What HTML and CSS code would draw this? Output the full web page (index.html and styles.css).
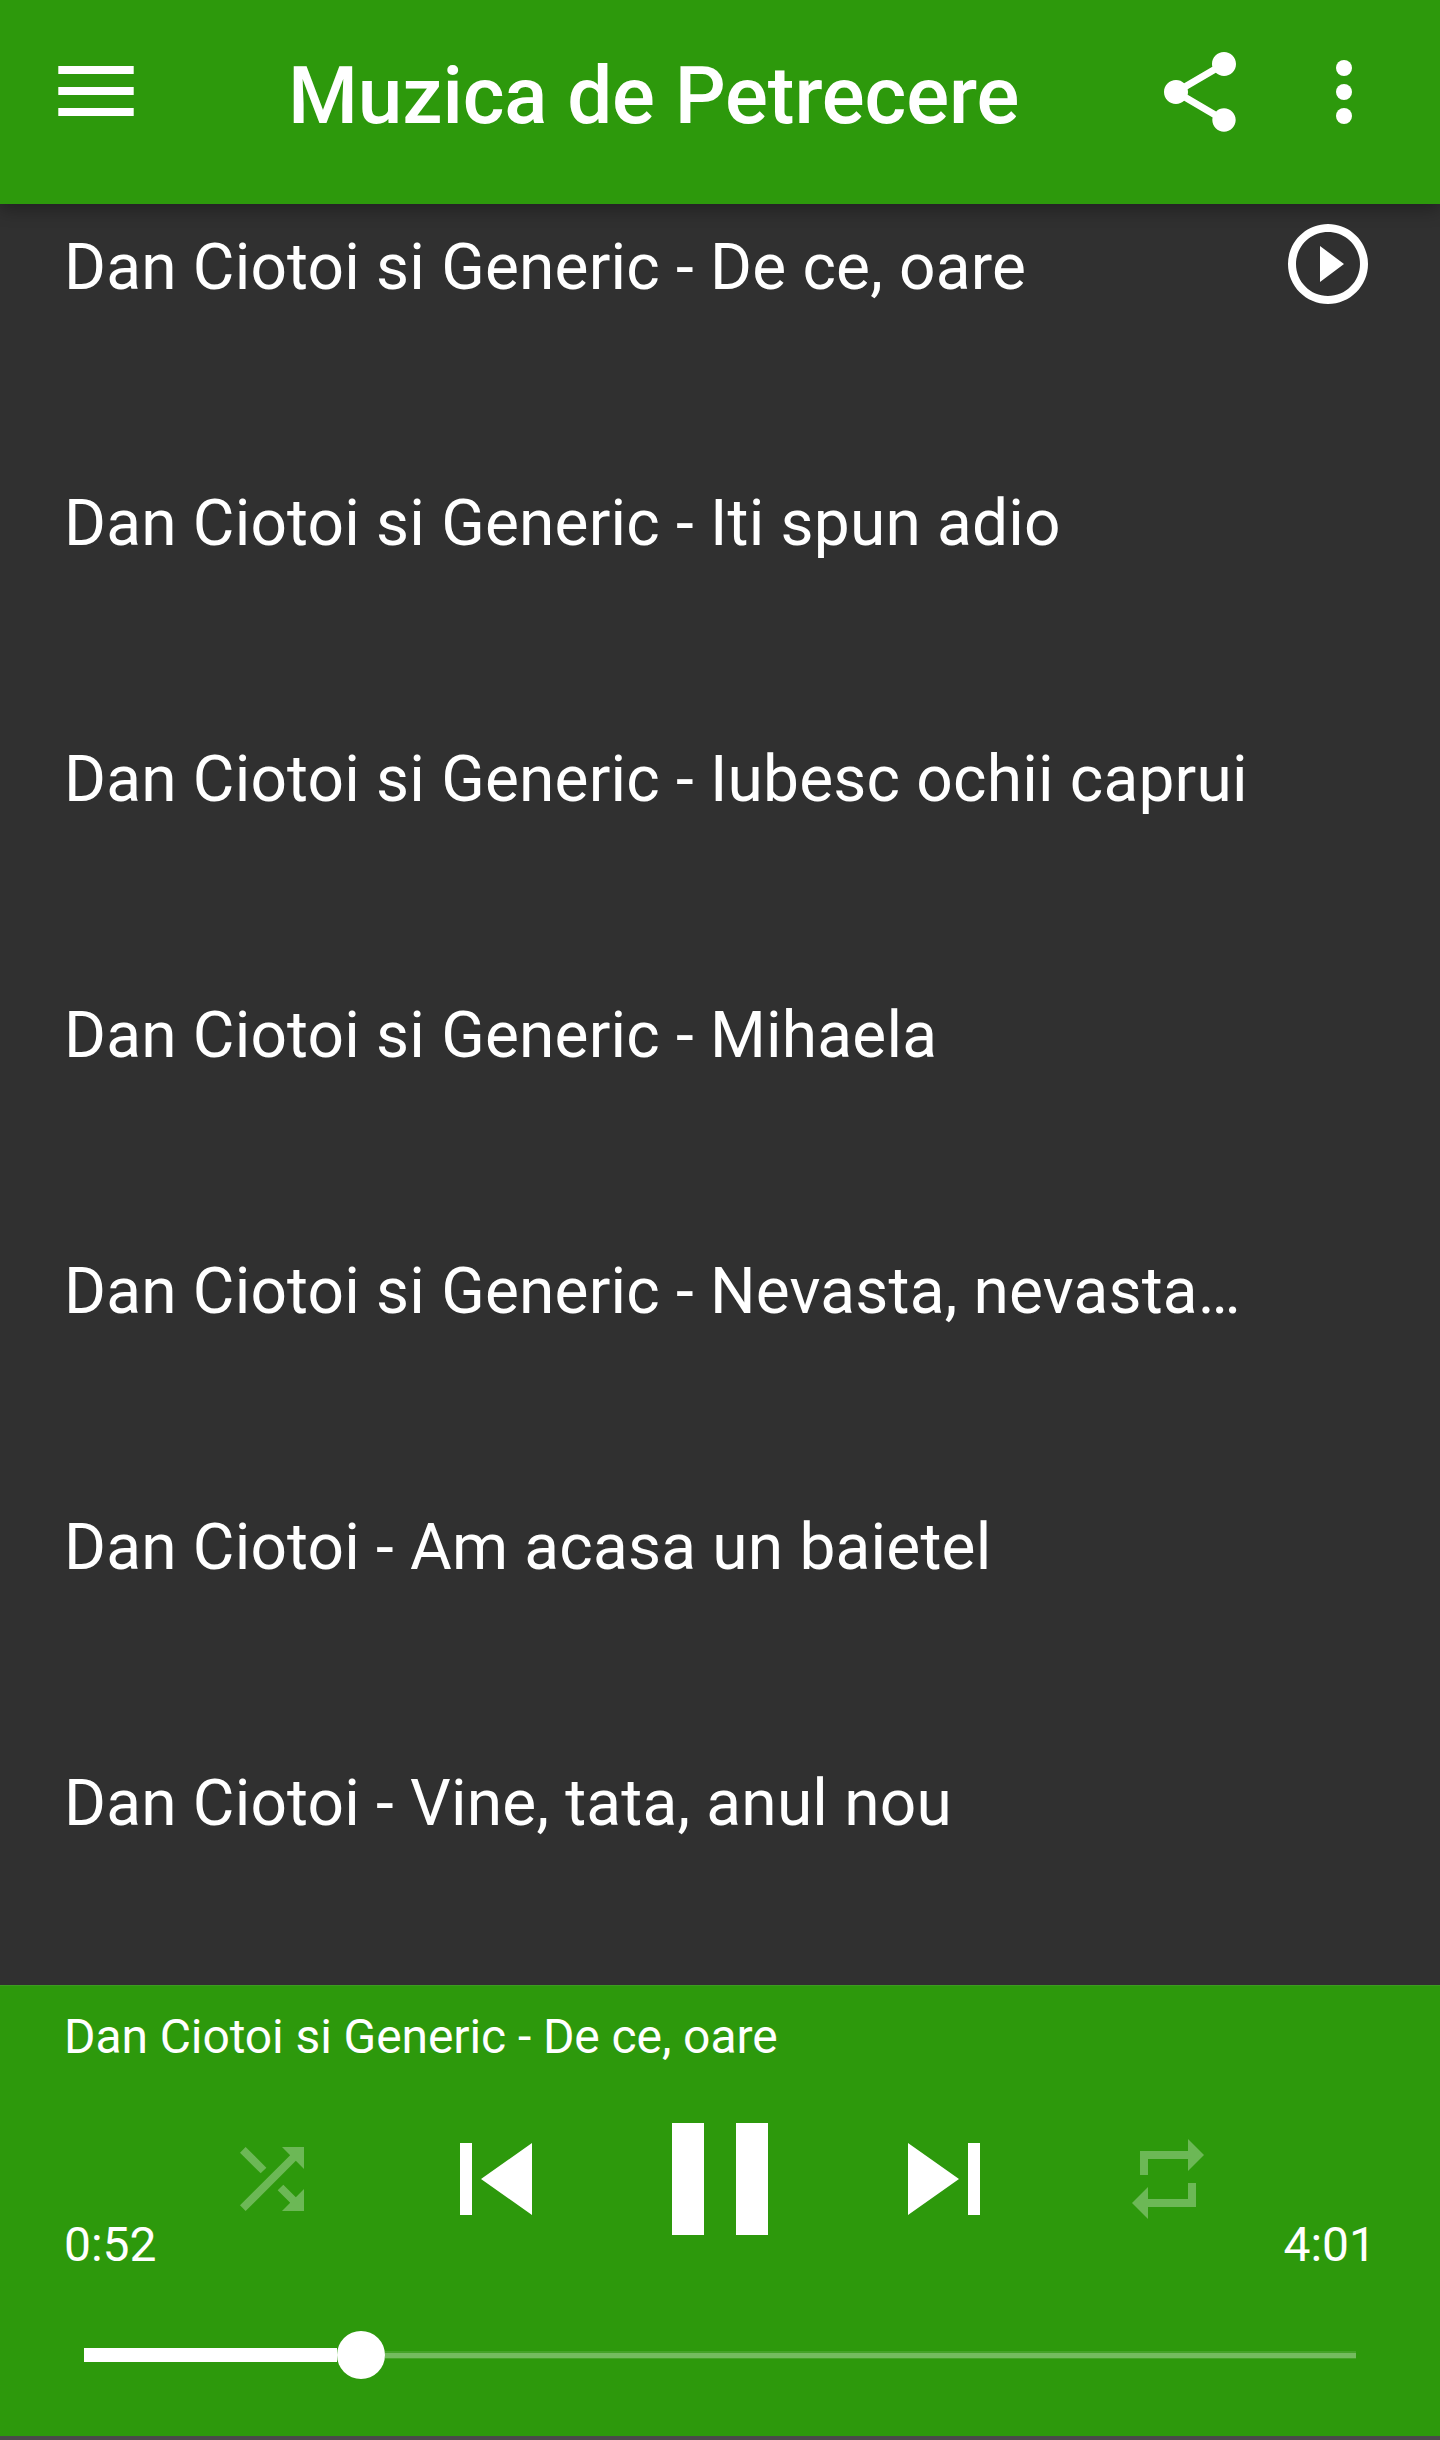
FILE: index.html
```html
<!DOCTYPE html>
<html lang="ro">
<head>
  <meta charset="UTF-8">
  <meta name="viewport" content="width=device-width, initial-scale=1.0">
  <title>Muzica de Petrecere</title>
  <link rel="stylesheet" href="styles.css">
</head>
<body>

  <header class="toolbar">
    <button class="menu-button" aria-label="Menu">
      <svg width="76" height="50" viewBox="0 0 76 50"><path d="M.3 0h75.4v8H.3zM.3 21h75.4v8H.3zM.3 42h75.4v8H.3z"/></svg>
    </button>
    <h1 class="title">Muzica de Petrecere</h1>
    <div class="actions">
      <button aria-label="Share">
        <svg width="96" height="96" viewBox="0 0 24 24"><path d="M18 16.08c-.76 0-1.44.3-1.96.77L8.91 12.7c.05-.23.09-.46.09-.7s-.04-.47-.09-.7l7.05-4.11c.54.5 1.25.81 2.04.81 1.66 0 3-1.34 3-3s-1.34-3-3-3-3 1.34-3 3c0 .24.04.47.09.7L8.04 9.81C7.5 9.31 6.79 9 6 9c-1.66 0-3 1.34-3 3s1.34 3 3 3c.79 0 1.5-.31 2.04-.81l7.12 4.16c-.05.21-.08.43-.08.65 0 1.61 1.31 2.92 2.92 2.92s2.92-1.31 2.92-2.92-1.31-2.92-2.92-2.92z"/></svg>
      </button>
      <button aria-label="More options">
        <svg width="96" height="96" viewBox="0 0 24 24"><circle cx="12" cy="6" r="2"/><circle cx="12" cy="12" r="2"/><circle cx="12" cy="18" r="2"/></svg>
      </button>
    </div>
  </header>

  <ul class="songs">
    <li>
      <span>Dan Ciotoi si Generic - De ce, oare</span>
      <svg width="96" height="96" viewBox="0 0 24 24"><path d="M10 16.5l6-4.5-6-4.5v9zM12 2C6.48 2 2 6.48 2 12s4.48 10 10 10 10-4.48 10-10S17.52 2 12 2zm0 18c-4.41 0-8-3.59-8-8s3.59-8 8-8 8 3.59 8 8-3.59 8-8 8z"/></svg>
    </li>
    <li><span>Dan Ciotoi si Generic - Iti spun adio</span></li>
    <li><span>Dan Ciotoi si Generic - Iubesc ochii caprui</span></li>
    <li><span>Dan Ciotoi si Generic - Mihaela</span></li>
    <li><span>Dan Ciotoi si Generic - Nevasta, nevasta…</span></li>
    <li><span>Dan Ciotoi - Am acasa un baietel</span></li>
    <li><span>Dan Ciotoi - Vine, tata, anul nou</span></li>
  </ul>

  <footer class="player">
    <div class="now-playing">Dan Ciotoi si Generic - De ce, oare</div>
    <div class="controls">
      <button class="off" aria-label="Shuffle">
        <svg width="96" height="96" viewBox="0 0 24 24"><path d="M10.59 9.17L5.41 4 4 5.41l5.17 5.17 1.42-1.41zM14.5 4l2.04 2.04L4 18.59 5.41 20 17.96 7.46 20 9.5V4h-5.5zm.33 9.41l-1.41 1.41 3.13 3.13L14.5 20H20v-5.5l-2.04 2.04-3.13-3.13z"/></svg>
      </button>
      <button aria-label="Previous">
        <svg width="144" height="144" viewBox="0 0 24 24"><path d="M6 6h2v12H6zm3.5 6l8.5 6V6z"/></svg>
      </button>
      <button aria-label="Pause">
        <svg width="192" height="192" viewBox="0 0 24 24"><path d="M6 19h4V5H6v14zm8-14v14h4V5h-4z"/></svg>
      </button>
      <button aria-label="Next">
        <svg width="144" height="144" viewBox="0 0 24 24"><path d="M6 18l8.5-6L6 6v12zM16 6v12h2V6h-2z"/></svg>
      </button>
      <button class="off" aria-label="Repeat">
        <svg width="96" height="96" viewBox="0 0 24 24"><path d="M7 7h10v3l4-4-4-4v3H5v6h2V7zm10 10H7v-3l-4 4 4 4v-3h12v-6h-2v4z"/></svg>
      </button>
    </div>
    <div class="times">
      <span>0:52</span>
      <span>4:01</span>
    </div>
    <div class="seekbar">
      <div class="elapsed"></div>
      <div class="thumb"></div>
      <div class="remaining"></div>
    </div>
  </footer>

</body>
</html>
```
FILE: styles.css
```css
* {
  box-sizing: border-box;
}

body {
  margin: 0;
  height: 2440px;
  display: flex;
  flex-direction: column;
  overflow: hidden;
  background-color: #303030;
  color: white;
  font-family: Roboto, sans-serif;
}

button {
  display: flex;
  align-items: center;
  justify-content: center;
  padding: 0;
  border: none;
  background: none;
}

svg {
  display: block;
  flex: none;
  fill: white;
}

/* top bar */
.toolbar {
  flex: none;
  z-index: 1;
  display: flex;
  align-items: flex-start;
  height: 204px;
  padding: 44px 48px 0 58px;
  background-color: #2d990c;
  box-shadow: 0 6px 16px rgba(0, 0, 0, 0.3);
}

.menu-button {
  margin-top: 22px;
}

.title {
  flex: 1;
  margin: 5px 0 0 154px;
  font-size: 80px;
  font-weight: 500;
  line-height: 94px;
  letter-spacing: -0.1px;
  white-space: nowrap;
}

.actions {
  display: flex;
  gap: 48px;
}

/* song list, scrolled a little under the top bar */
.songs {
  flex: 1;
  min-height: 0;
  margin: -68px 0 0;
  padding: 0;
  list-style: none;
  overflow: hidden;
}

.songs li {
  display: flex;
  align-items: center;
  justify-content: space-between;
  height: 256px;
  padding: 0 64px;
  font-size: 64px;
  line-height: 76px;
  letter-spacing: 0.19px;
  white-space: nowrap;
}

.songs span {
  padding-top: 8px;
}

/* player */
.player {
  flex: none;
  display: flex;
  flex-direction: column;
  height: 455px;
  padding: 23px 64px 0;
  background-color: #2d990c;
  border-top: 1px solid #3c9d20;
  border-bottom: 4px solid #4a4a4a;
  font-size: 48px;
  line-height: 56px;
}

.now-playing {
  height: 74px;
  letter-spacing: -0.09px;
}

.controls {
  display: flex;
  justify-content: center;
  height: 192px;
}

.controls button {
  width: 224px;
}

.off {
  opacity: 0.3;
}

.times {
  display: flex;
  justify-content: space-between;
  margin-top: -58px;
}

.seekbar {
  display: flex;
  align-items: center;
  height: 48px;
  margin: 58px 20px 0;
}

.elapsed {
  width: 253px;
  height: 14px;
  background-color: white;
}

.thumb {
  width: 48px;
  height: 48px;
  border-radius: 50%;
  background-color: white;
}

.remaining {
  flex: 1;
  height: 8px;
  background-color: #74bb5f;
  border: solid #44a327;
  border-width: 2px 0 1px;
}
```
